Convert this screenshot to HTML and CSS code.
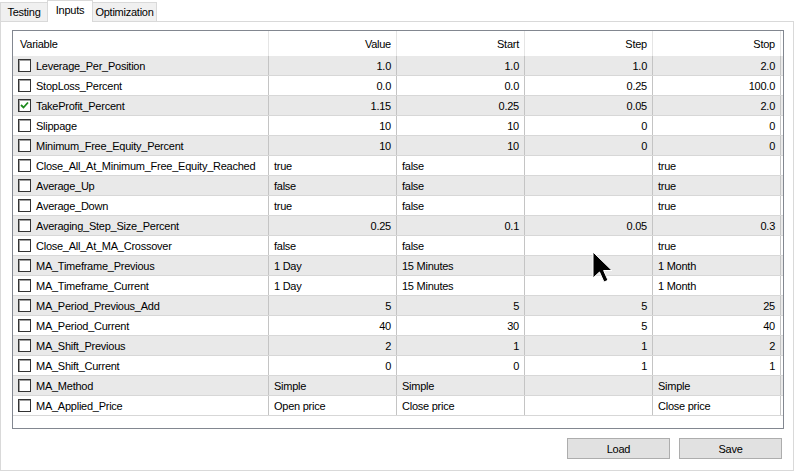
FILE: index.html
```html
<!DOCTYPE html>
<html>
<head>
<meta charset="utf-8">
<link rel="stylesheet" href="styles.css">
</head>
<body>
<div class="tabs">
  <div class="tab t1">Testing</div>
  <div class="tab t2 active">Inputs</div>
  <div class="tab t3">Optimization</div>
</div>
<div class="panel">
  <div class="list">
    <div class="row head">
      <div class="cell var">Variable</div>
      <div class="cell num">Value</div>
      <div class="cell num">Start</div>
      <div class="cell num">Step</div>
      <div class="cell num">Stop</div>
    </div>
    <div class="row odd"><div class="cell var"><span class="cb"></span>Leverage_Per_Position</div><div class="cell num">1.0</div><div class="cell num">1.0</div><div class="cell num">1.0</div><div class="cell num">2.0</div></div>
    <div class="row"><div class="cell var"><span class="cb"></span>StopLoss_Percent</div><div class="cell num">0.0</div><div class="cell num">0.0</div><div class="cell num">0.25</div><div class="cell num">100.0</div></div>
    <div class="row odd"><div class="cell var"><span class="cb on"><svg width="11" height="11" viewBox="0 0 11 11"><path d="M2 5 L4.5 7.5 L9 2.5" fill="none" stroke="#1c8a1c" stroke-width="1.8"/></svg></span>TakeProfit_Percent</div><div class="cell num">1.15</div><div class="cell num">0.25</div><div class="cell num">0.05</div><div class="cell num">2.0</div></div>
    <div class="row"><div class="cell var"><span class="cb"></span>Slippage</div><div class="cell num">10</div><div class="cell num">10</div><div class="cell num">0</div><div class="cell num">0</div></div>
    <div class="row odd"><div class="cell var"><span class="cb"></span>Minimum_Free_Equity_Percent</div><div class="cell num">10</div><div class="cell num">10</div><div class="cell num">0</div><div class="cell num">0</div></div>
    <div class="row"><div class="cell var"><span class="cb"></span>Close_All_At_Minimum_Free_Equity_Reached</div><div class="cell">true</div><div class="cell">false</div><div class="cell"></div><div class="cell">true</div></div>
    <div class="row odd"><div class="cell var"><span class="cb"></span>Average_Up</div><div class="cell">false</div><div class="cell">false</div><div class="cell"></div><div class="cell">true</div></div>
    <div class="row"><div class="cell var"><span class="cb"></span>Average_Down</div><div class="cell">true</div><div class="cell">false</div><div class="cell"></div><div class="cell">true</div></div>
    <div class="row odd"><div class="cell var"><span class="cb"></span>Averaging_Step_Size_Percent</div><div class="cell num">0.25</div><div class="cell num">0.1</div><div class="cell num">0.05</div><div class="cell num">0.3</div></div>
    <div class="row"><div class="cell var"><span class="cb"></span>Close_All_At_MA_Crossover</div><div class="cell">false</div><div class="cell">false</div><div class="cell"></div><div class="cell">true</div></div>
    <div class="row odd"><div class="cell var"><span class="cb"></span>MA_Timeframe_Previous</div><div class="cell">1 Day</div><div class="cell">15 Minutes</div><div class="cell"></div><div class="cell">1 Month</div></div>
    <div class="row"><div class="cell var"><span class="cb"></span>MA_Timeframe_Current</div><div class="cell">1 Day</div><div class="cell">15 Minutes</div><div class="cell"></div><div class="cell">1 Month</div></div>
    <div class="row odd"><div class="cell var"><span class="cb"></span>MA_Period_Previous_Add</div><div class="cell num">5</div><div class="cell num">5</div><div class="cell num">5</div><div class="cell num">25</div></div>
    <div class="row"><div class="cell var"><span class="cb"></span>MA_Period_Current</div><div class="cell num">40</div><div class="cell num">30</div><div class="cell num">5</div><div class="cell num">40</div></div>
    <div class="row odd"><div class="cell var"><span class="cb"></span>MA_Shift_Previous</div><div class="cell num">2</div><div class="cell num">1</div><div class="cell num">1</div><div class="cell num">2</div></div>
    <div class="row"><div class="cell var"><span class="cb"></span>MA_Shift_Current</div><div class="cell num">0</div><div class="cell num">0</div><div class="cell num">1</div><div class="cell num">1</div></div>
    <div class="row odd"><div class="cell var"><span class="cb"></span>MA_Method</div><div class="cell">Simple</div><div class="cell">Simple</div><div class="cell"></div><div class="cell">Simple</div></div>
    <div class="row"><div class="cell var"><span class="cb"></span>MA_Applied_Price</div><div class="cell">Open price</div><div class="cell">Close price</div><div class="cell"></div><div class="cell">Close price</div></div>
  </div>
  <div class="buttons">
    <button class="btn">Load</button>
    <button class="btn">Save</button>
  </div>
</div>
<svg class="cursor" width="22" height="34" viewBox="0 0 22 34"><path d="M1 1 L1 27 L7.5 21 L12 31 L16 29.3 L11.6 19.5 L20 19.5 Z" fill="#000" stroke="#fff" stroke-width="1"/></svg>
</body>
</html>
```
FILE: styles.css
```css
* { box-sizing: border-box; }
html, body { margin: 0; padding: 0; background: #fff; }
body {
  font-family: "Liberation Sans", Arial, sans-serif;
  font-size: 11px;
  letter-spacing: -0.25px;
  color: #000;
  width: 795px;
  height: 472px;
  overflow: hidden;
  position: relative;
}
.tabs { display: flex; height: 21px; align-items: flex-end; position: relative; z-index: 2; }
.tab {
  height: 19px;
  border: 1px solid #d9d9d9;
  border-bottom: none;
  background: #f0f0f0;
  display: flex; align-items: center; justify-content: center;
  padding-top: 0;
}
.t1 { width: 48px; }
.t2 { width: 46px; margin-left: -1px; }
.t3 { width: 65px; margin-left: -1px; }
.tab.active { height: 22px; background: #fff; margin-bottom: -1px; padding-top: 0; padding-bottom: 3px; }
.panel {
  width: 794px;
  height: 450px;
  border: 1px solid #d9d9d9;
  padding: 8px 9px 0 11px;
}
.list {
  border: 1px solid #828790;
  height: 399px;
  background: #fff;
}
.row {
  display: grid;
  grid-template-columns: 256px 128px 128px 128px 128px;
  height: 20px;
  border-bottom: 1px solid #d7d7d7;
}
.row.odd { background: #e9e9e9; }
.row.head { height: 25px; border-bottom: none; }
.cell {
  border-right: 1px solid #c4c4c4;
  display: flex; align-items: center;
  padding: 0 5px;
  white-space: nowrap;
  overflow: hidden;
}
.row.head .cell { border-right-color: #e5e5e5; padding-top: 1px; }
.row.head .cell.var { padding-left: 7px; }
.cell.num { justify-content: flex-end; }
.cell.var { padding-left: 5px; }
.cb {
  width: 13px; height: 13px;
  border: 1px solid #333;
  background: #fff;
  box-shadow: inset 1px 1px 0 #a0a0a0;
  margin-right: 5px;
  flex: none;
  display: flex; align-items: center; justify-content: center;
}
.buttons {
  display: flex; justify-content: flex-end; gap: 9px;
  margin-top: 9px;
  padding-right: 2px;
}
.btn {
  width: 103px; height: 21px;
  border: 1px solid #adadad;
  background: #e1e1e1;
  font-family: "Liberation Sans", Arial, sans-serif;
  font-size: 11px;
  letter-spacing: -0.25px;
  color: #000;
  padding: 0;
}
.cursor { position: absolute; left: 592px; top: 251px; }
```
